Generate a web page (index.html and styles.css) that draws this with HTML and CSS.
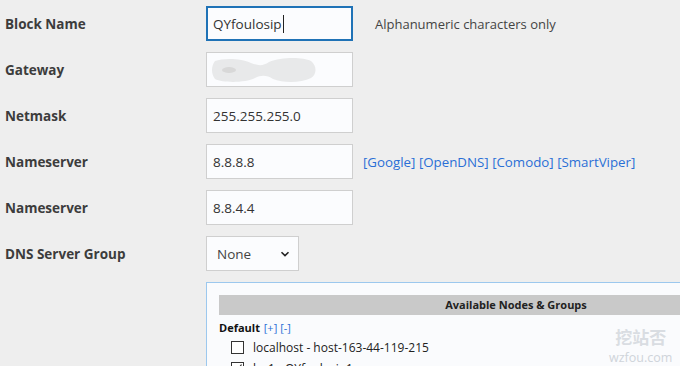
FILE: index.html
```html
<!DOCTYPE html>
<html lang="en">
<head>
    <meta charset="UTF-8">
    <meta name="viewport" content="width=device-width, initial-scale=1.0">
    <title>IP Block</title>
    <link rel="stylesheet" href="styles.css">
</head>
<body>
    <form class="ip-form">
        <div class="row">
            <label class="label">Block Name</label>
            <div class="field focused">QYfoulosip<span class="caret"></span></div>
            <span class="hint">Alphanumeric characters only</span>
        </div>
        <div class="row">
            <label class="label">Gateway</label>
            <div class="field">
                <svg class="blur" width="110" height="28" viewBox="0 0 110 28">
                    <path d="M4 5 C12 2 30 2 40 7 C48 10 52 10 58 6 C70 1 92 1 100 5 C106 10 106 18 100 22 C90 27 72 27 62 23 C56 19 50 19 44 22 C34 27 12 27 4 23 C0 18 0 10 4 5 Z" fill="#e8e9ea"/>
                    <ellipse cx="18" cy="14" rx="7" ry="3" fill="#d8d8d8"/>
                </svg>
            </div>
        </div>
        <div class="row">
            <label class="label">Netmask</label>
            <input class="field" type="text" value="255.255.255.0">
        </div>
        <div class="row">
            <label class="label">Nameserver</label>
            <input class="field" type="text" value="8.8.8.8">
            <span class="presets">
                <a href="#">[Google]</a>
                <a href="#">[OpenDNS]</a>
                <a href="#">[Comodo]</a>
                <a href="#">[SmartViper]</a>
            </span>
        </div>
        <div class="row">
            <label class="label">Nameserver</label>
            <input class="field" type="text" value="8.8.4.4">
        </div>
        <div class="row">
            <label class="label">DNS Server Group</label>
            <div class="select">
                <span>None</span>
                <svg width="10" height="6" viewBox="0 0 10 6"><path d="M1.5 1.2 L5 4.6 L8.5 1.2" fill="none" stroke="#222" stroke-width="1.6"/></svg>
            </div>
        </div>

        <div class="nodes">
            <div class="nodes-head">Available Nodes &amp; Groups</div>
            <div class="group">
                <b>Default</b>
                <a href="#">[+]</a>
                <a href="#">[-]</a>
            </div>
            <div class="node">
                <span class="check"></span>
                <span>localhost - host-163-44-119-215</span>
            </div>
            <div class="node">
                <span class="check">
                    <svg width="11" height="11" viewBox="0 0 11 11"><path d="M1.5 5.5 L4.5 8.5 L9.5 1.5" fill="none" stroke="#333" stroke-width="1.2"/></svg>
                </span>
                <span>lxc1 - QYfoulosip1</span>
            </div>
            <div class="watermark">
                <div class="wm-cn">挖站否</div>
                <div class="wm-en">wzfou.com</div>
            </div>
        </div>
    </form>
</body>
</html>
```

FILE: styles.css
```css
body {
    margin: 0;
    padding: 0;
    background-color: #eeeeee;
    font-family: "Open Sans", "Noto Sans", sans-serif;
    color: #444;
    overflow: hidden;
    height: 366px;
}

.ip-form {
    padding-top: 6px;
}

.row {
    display: flex;
    align-items: center;
    height: 35px;
    margin-bottom: 11px;
}

.label {
    width: 201px;
    padding-left: 5px;
    font-size: 13.5px;
    font-weight: bold;
    color: #3c3c3c;
}

.field {
    box-sizing: border-box;
    width: 147px;
    height: 35px;
    padding: 0 6px;
    border: 1px solid #cfcfcf;
    background-color: #fbfcfe;
    font-family: "Open Sans", "Noto Sans", sans-serif;
    font-size: 13.5px;
    color: #333;
    display: flex;
    align-items: center;
    margin: 0;
    outline: none;
}

.field.focused {
    border-color: #1f72b6;
    box-shadow: inset 0 0 0 1px #1f72b6;
}

.caret {
    display: inline-block;
    width: 1px;
    height: 18px;
    background-color: #222;
    margin-left: 1px;
}

.blur {
    margin-left: -2px;
}

.hint {
    margin-left: 22px;
    font-size: 13px;
    color: #444;
}

.presets {
    margin-left: 10px;
    font-size: 13.3px;
}

.presets a,
.group a {
    color: #2a6fd6;
    text-decoration: none;
}

.select {
    box-sizing: border-box;
    width: 93px;
    height: 35px;
    border: 1px solid #cfcfcf;
    background-color: #fbfcfe;
    display: flex;
    align-items: center;
    justify-content: space-between;
    padding: 0 8px 0 10px;
    font-size: 13.5px;
    color: #444;
}

.nodes {
    position: relative;
    margin-left: 206px;
    width: 620px;
    height: 200px;
    border: 1px solid #9cc8ee;
    background-color: #fafbfd;
    padding: 12px;
    box-sizing: border-box;
}

.nodes-head {
    background-color: #c9c9c9;
    height: 20px;
    line-height: 20px;
    text-align: center;
    font-size: 11px;
    font-weight: bold;
    color: #222;
}

.group {
    margin-top: 5px;
    font-size: 11px;
    color: #111;
}

.group b {
    margin-right: 1px;
}

.node {
    display: flex;
    align-items: center;
    margin-top: 4px;
    padding-left: 12px;
    font-size: 12px;
    color: #222;
}

.check {
    box-sizing: border-box;
    width: 13px;
    height: 13px;
    border: 1px solid #333;
    background-color: #fff;
    margin-right: 9px;
    display: flex;
}

.watermark {
    position: absolute;
    left: 402px;
    top: 44px;
    text-align: center;
    color: #d9dde2;
}

.wm-cn {
    font-family: "Noto Sans CJK SC", sans-serif;
    font-weight: bold;
    font-size: 17px;
    letter-spacing: 0;
    line-height: 20px;
}

.wm-en {
    margin-top: 3px;
    font-size: 12.5px;
    color: #cfd4da;
    line-height: 15px;
}
```
